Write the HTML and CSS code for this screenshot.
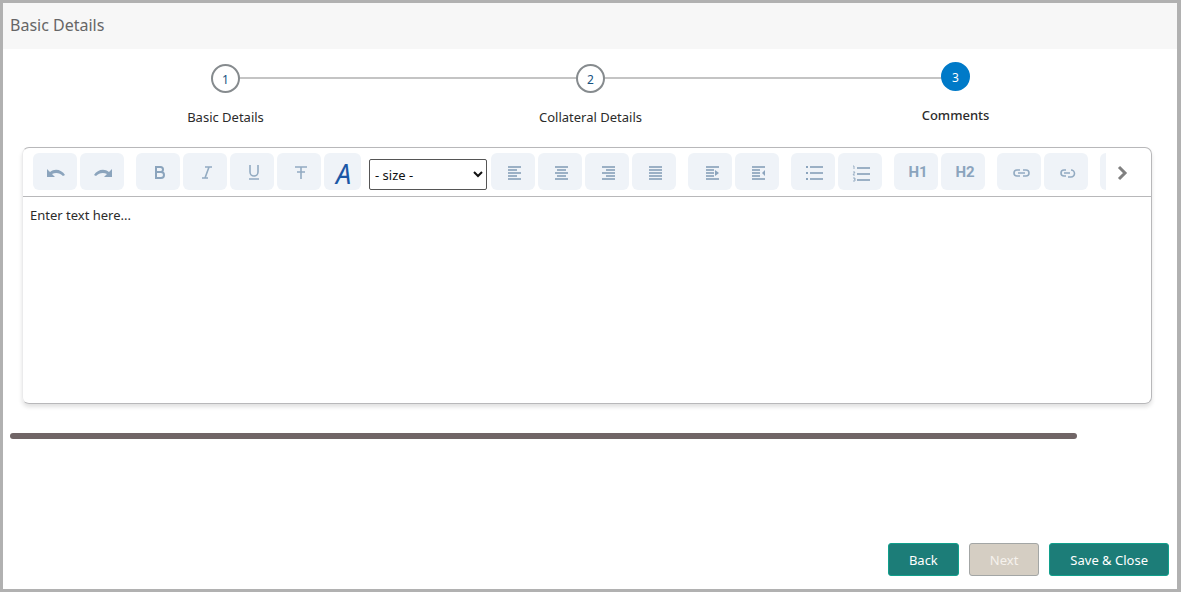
FILE: index.html
```html
<!DOCTYPE html>
<html lang="en">
<head>
    <meta charset="UTF-8">
    <meta name="viewport" content="width=device-width, initial-scale=1.0">
    <title>Basic Details</title>
    <link rel="stylesheet" href="styles.css">
</head>
<body>
    <header class="page-header">
        <h1>Basic Details</h1>
    </header>
    <main>
        <ol class="steps">
            <li class="step">
                <span class="step-number">1</span>
                <span class="step-label">Basic Details</span>
            </li>
            <li class="step">
                <span class="step-number">2</span>
                <span class="step-label">Collateral Details</span>
            </li>
            <li class="step current" aria-current="step">
                <span class="step-number">3</span>
                <span class="step-label">Comments</span>
            </li>
        </ol>

        <section class="editor">
            <div class="toolbar">
                <div class="tools">
                    <div class="group">
                        <button type="button" class="tool" aria-label="Undo">
                            <svg viewBox="0 0 20 20"><path class="solid" d="M1 7v8h8l-3-3c4-2 8-1 11 2l2-1C16 8 9 6 4 10z"/></svg>
                        </button>
                        <button type="button" class="tool" aria-label="Redo">
                            <svg viewBox="0 0 20 20"><path class="solid" d="M19 7v8h-8l3-3c-4-2-8-1-11 2l-2-1C4 8 11 6 16 10z"/></svg>
                        </button>
                    </div>
                    <div class="group">
                        <button type="button" class="tool" aria-label="Bold">
                            <svg viewBox="0 0 20 20"><path class="thick" d="M7 5v11h5a3 3 0 0 0 0-6H7h4.500a2.500 2.500 0 0 0 0-5z"/></svg>
                        </button>
                        <button type="button" class="tool" aria-label="Italic">
                            <svg viewBox="0 0 20 20"><path class="light" d="M9 5h7M6 16h6M13 5L9 16"/></svg>
                        </button>
                        <button type="button" class="tool" aria-label="Underline">
                            <svg viewBox="0 0 20 20"><path class="light" d="M7 3v7a4 4 0 0 0 8 0V3M6 17h10"/></svg>
                        </button>
                        <button type="button" class="tool" aria-label="Strikethrough">
                            <svg viewBox="0 0 20 20"><path class="light" d="M5 5h12M11 5v12M7 10h8"/></svg>
                        </button>
                        <button type="button" class="tool font-tool" aria-label="Font">A</button>
                    </div>
                    <select class="size" aria-label="Font size">
                        <option>- size -</option>
                    </select>
                    <div class="group">
                        <button type="button" class="tool" aria-label="Align left">
                            <svg viewBox="0 0 20 20"><path d="M4 5h13M4 8h9M4 11h13M4 14h9M4 17h13"/></svg>
                        </button>
                        <button type="button" class="tool" aria-label="Align center">
                            <svg viewBox="0 0 20 20"><path d="M4 5h13M6 8h9M4 11h13M6 14h9M4 17h13"/></svg>
                        </button>
                        <button type="button" class="tool" aria-label="Align right">
                            <svg viewBox="0 0 20 20"><path d="M4 5h13M8 8h9M4 11h13M8 14h9M4 17h13"/></svg>
                        </button>
                        <button type="button" class="tool" aria-label="Justify">
                            <svg viewBox="0 0 20 20"><path d="M4 5h13M4 8h13M4 11h13M4 14h13M4 17h13"/></svg>
                        </button>
                    </div>
                    <div class="group">
                        <button type="button" class="tool" aria-label="Indent">
                            <svg viewBox="0 0 20 20"><path d="M5 5h13M5 8h8M5 11h8M5 14h8M5 17h13"/><path class="solid" d="M14 8l4 3-4 3z"/></svg>
                        </button>
                        <button type="button" class="tool" aria-label="Outdent">
                            <svg viewBox="0 0 20 20"><path d="M4 5h13M4 8h8M4 11h8M4 14h8M4 17h13"/><path class="solid" d="M17 8l-3 3 3 3z"/></svg>
                        </button>
                    </div>
                    <div class="group">
                        <button type="button" class="tool" aria-label="Bulleted list">
                            <svg viewBox="0 0 20 20"><path d="M6 5h13M6 11h13M6 17h13"/><path class="thick" d="M2 5h2M2 11h2M2 17h2"/></svg>
                        </button>
                        <button type="button" class="tool" aria-label="Numbered list">
                            <svg viewBox="0 0 20 20"><path d="M6 6h13M6 12h13M6 18h13"/><path class="thin" d="M2 4h1v3M2 10h2L2 13h2M2 16h2v1H3h1v2H2"/></svg>
                        </button>
                    </div>
                    <div class="group">
                        <button type="button" class="tool heading-tool" aria-label="Heading 1">H1</button>
                        <button type="button" class="tool heading-tool" aria-label="Heading 2">H2</button>
                    </div>
                    <div class="group">
                        <button type="button" class="tool" aria-label="Insert link">
                            <svg viewBox="0 0 20 20"><path class="light" d="M10 8H7a3 3 0 0 0 0 6h3M13 8h3a3 3 0 0 1 0 6h-3M8 11h7"/></svg>
                        </button>
                        <button type="button" class="tool" aria-label="Remove link">
                            <svg viewBox="0 0 20 20"><path class="light" d="M9 8H7a3 3 0 0 0 0 6h2M7 11h6M14 8a3 3 0 1 1 0 7h-3"/></svg>
                        </button>
                    </div>
                    <div class="group">
                        <button type="button" class="tool" aria-label="Insert image"></button>
                    </div>
                </div>
                <button type="button" class="more" aria-label="More tools">
                    <svg viewBox="0 0 14 16"><path d="M3 2l6 6-6 6"/></svg>
                </button>
            </div>
            <textarea class="comment" aria-label="Comments" placeholder="Enter text here..."></textarea>
        </section>

        <div class="scroll-track">
            <div class="scroll-thumb"></div>
        </div>
    </main>
    <footer class="actions">
        <button type="button" class="action">Back</button>
        <button type="button" class="action" disabled>Next</button>
        <button type="button" class="action">Save &amp; Close</button>
    </footer>
</body>
</html>
```
FILE: styles.css
```css
*,
*::before,
*::after {
    box-sizing: border-box;
}

body {
    display: flex;
    flex-direction: column;
    min-height: 100vh;
    margin: 0;
    border: 3px solid #b1b1b1;
    border-right-width: 4px;
    background-color: #fff;
    color: #2b2b2b;
    font-family: "Noto Sans", "Open Sans", sans-serif;
    font-size: 13px;
}

button,
select,
textarea {
    font: inherit;
}

.page-header {
    padding: 10px 7px 12px;
    background-color: #f7f7f7;
}

.page-header h1 {
    margin: 0;
    color: #666;
    font-size: 16px;
    font-weight: normal;
    line-height: 24px;
}

/* Steps */
.steps {
    display: flex;
    margin: 0;
    padding: 15px 39px 0 40px;
    list-style: none;
}

.step {
    position: relative;
    display: flex;
    flex: 1;
    flex-direction: column;
    align-items: center;
    gap: 14px;
}

/* line to the next step */
.step:not(:last-child)::after {
    content: '';
    position: absolute;
    top: 13px;
    left: 50%;
    width: 100%;
    height: 2px;
    background-color: #c4c4c4;
}

.step-number {
    z-index: 1;
    width: 29px;
    height: 29px;
    border: 2px solid #868b8e;
    border-radius: 50%;
    background-color: #fff;
    color: #17527f;
    font-size: 12px;
    line-height: 27px;
    text-align: center;
}

.step-label {
    line-height: 20px;
}

.current {
    margin-top: -2px;
}

.current .step-number {
    border-color: #007ac8;
    background-color: #007ac8;
    color: #fff;
}

.current .step-label {
    font-weight: 500;
}

/* Editor */
.editor {
    margin: 20px 25px 0 19px;
    border: 1px solid #b8b8ba;
    border-left-color: #ebebec;
    border-radius: 7px;
    box-shadow: 0 3px 4px rgba(0, 0, 0, 0.12);
}

.toolbar {
    display: flex;
    align-items: center;
    padding: 5px 16px 6px 10px;
    border-bottom: 1px solid #b8b8ba;
}

.tools {
    display: flex;
    flex: 1;
    gap: 12px;
    min-width: 0;
    overflow: hidden;
}

.group {
    display: flex;
    flex: none;
    gap: 3px;
}

.tool {
    display: flex;
    flex: none;
    align-items: center;
    justify-content: center;
    width: 44px;
    height: 37px;
    padding: 0 0 0 2px;
    border: 0;
    border-radius: 6px;
    background-color: #eff3f8;
    color: #8ba4bd;
}

.tool svg {
    width: 20px;
    height: 20px;
    fill: none;
    stroke: #9bb0c5;
    stroke-width: 2;
}

.tool .solid {
    fill: #8ba4bd;
    stroke: none;
}

.tool .thick {
    stroke: #8ba4bd;
}

.tool .light {
    stroke: #93abc2;
    stroke-width: 1.600;
}

.tool .thin {
    stroke-width: 1;
}

.font-tool {
    width: 37px;
    padding-top: 4px;
    color: #1b57a6;
    font-size: 27px;
    font-style: italic;
    line-height: 32px;
}

.heading-tool {
    padding-left: 4px;
    font-family: Roboto, sans-serif;
    font-size: 15px;
    font-weight: bold;
}

.size {
    flex: none;
    align-self: flex-end;
    width: 118px;
    height: 31px;
    margin: 0 -8px 0 -4px;
    padding: 0 0 0 1px;
    border: 1px solid #555;
    border-radius: 2px;
    background-color: #fff;
    color: #111;
}

.more {
    flex: none;
    width: 29px;
    height: 24px;
    padding: 5px 5px 3px 10px;
    border: 0;
    background: none;
}

.more svg {
    display: block;
    width: 14px;
    height: 16px;
    fill: none;
    stroke: #808080;
    stroke-width: 3;
}

.comment {
    display: block;
    width: 100%;
    height: 206px;
    padding: 8px 7px;
    border: 0;
    border-radius: 7px;
    background: none;
    color: inherit;
    line-height: 20px;
    outline: 0;
    resize: none;
}

.comment::placeholder {
    color: #2b2b2b;
}

.scroll-track {
    margin: 29px 7px 0;
}

.scroll-thumb {
    width: 92%;
    height: 6px;
    border-radius: 3px;
    background-color: #706566;
}

/* Buttons */
.actions {
    display: flex;
    justify-content: flex-end;
    gap: 10px;
    margin-top: auto;
    padding: 13px 8px;
}

.action {
    height: 33px;
    padding: 0 20px;
    border: 1px solid #10a08c;
    border-radius: 3px;
    background-color: #1c7d78;
    color: #fff;
}

.action:disabled {
    border-color: #a3a6a5;
    background-color: #d5cec3;
    color: #f5f2ed;
}
```
